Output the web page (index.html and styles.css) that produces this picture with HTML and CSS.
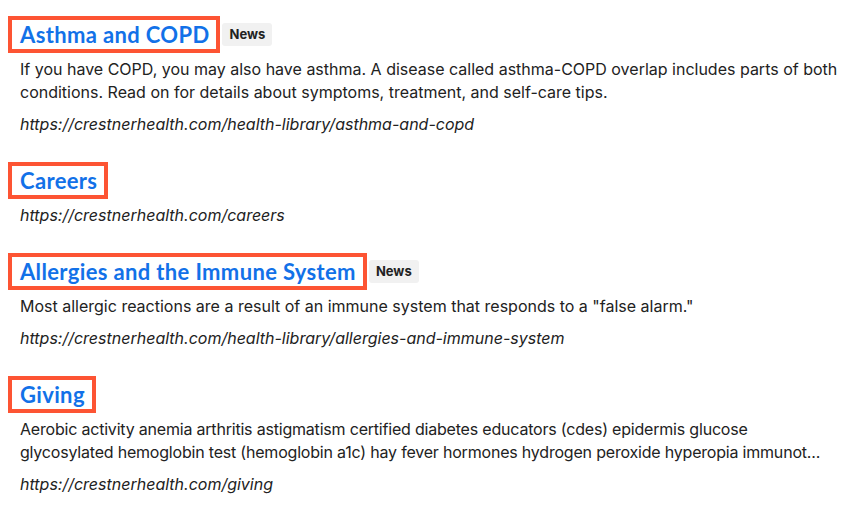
FILE: index.html
```html
<!DOCTYPE html>
<html>
<head>
<meta charset="utf-8">
<link rel="stylesheet" href="styles.css">
</head>
<body>
<div class="results">
  <div class="result">
    <div class="title-row">
      <a class="title" href="#">Asthma and COPD</a>
      <span class="badge">News</span>
    </div>
    <p class="desc">If you have COPD, you may also have asthma. A disease called asthma-COPD overlap includes parts of both conditions. Read on for details about symptoms, treatment, and self-care tips.</p>
    <p class="url">https://crestnerhealth.com/health-library/asthma-and-copd</p>
  </div>
  <div class="result">
    <div class="title-row">
      <a class="title" href="#">Careers</a>
    </div>
    <p class="url">https://crestnerhealth.com/careers</p>
  </div>
  <div class="result">
    <div class="title-row">
      <a class="title" href="#">Allergies and the Immune System</a>
      <span class="badge">News</span>
    </div>
    <p class="desc">Most allergic reactions are a result of an immune system that responds to a "false alarm."</p>
    <p class="url">https://crestnerhealth.com/health-library/allergies-and-immune-system</p>
  </div>
  <div class="result">
    <div class="title-row">
      <a class="title" href="#">Giving</a>
    </div>
    <p class="desc desc-tight">Aerobic activity anemia arthritis astigmatism certified diabetes educators (cdes) epidermis glucose glycosylated hemoglobin test (hemoglobin a1c) hay fever hormones hydrogen peroxide hyperopia immunot...</p>
    <p class="url">https://crestnerhealth.com/giving</p>
  </div>
</div>
</body>
</html>
```

FILE: styles.css
```css
html, body {
  margin: 0;
  padding: 0;
  background: #ffffff;
}

.results {
  display: flex;
  flex-direction: column;
  gap: 26px;
  padding: 16px 9px 0 8px;
  font-family: Inter, "Noto Sans", sans-serif;
  color: #222222;
}

.result {
  display: flex;
  flex-direction: column;
}

.title-row {
  display: flex;
  align-items: center;
  gap: 2px;
  margin-bottom: 5px;
}

.title {
  font-family: Lato, "Noto Sans", sans-serif;
  font-weight: 700;
  font-size: 22px;
  letter-spacing: 0.35px;
  line-height: 25px;
  color: #1271e8;
  text-decoration: none;
  border: 4px solid #fd5433;
  padding: 2px 7px 2px 8px;
}

.badge {
  font-family: Inter, sans-serif;
  font-weight: 700;
  font-size: 13px;
  line-height: 23px;
  height: 23px;
  padding: 0 7px;
  background: #f1f1f1;
  border-radius: 3px;
  color: #222222;
}

.desc {
  margin: 0;
  padding-left: 12px;
  font-size: 16px;
  line-height: 23px;
}

.desc-tight {
  letter-spacing: -0.2px;
}

.url {
  margin: 9px 0 0 0;
  padding-left: 12px;
  font-size: 16px;
  line-height: 23px;
  font-style: italic;
}

.title-row + .url {
  margin-top: 0;
}
```
